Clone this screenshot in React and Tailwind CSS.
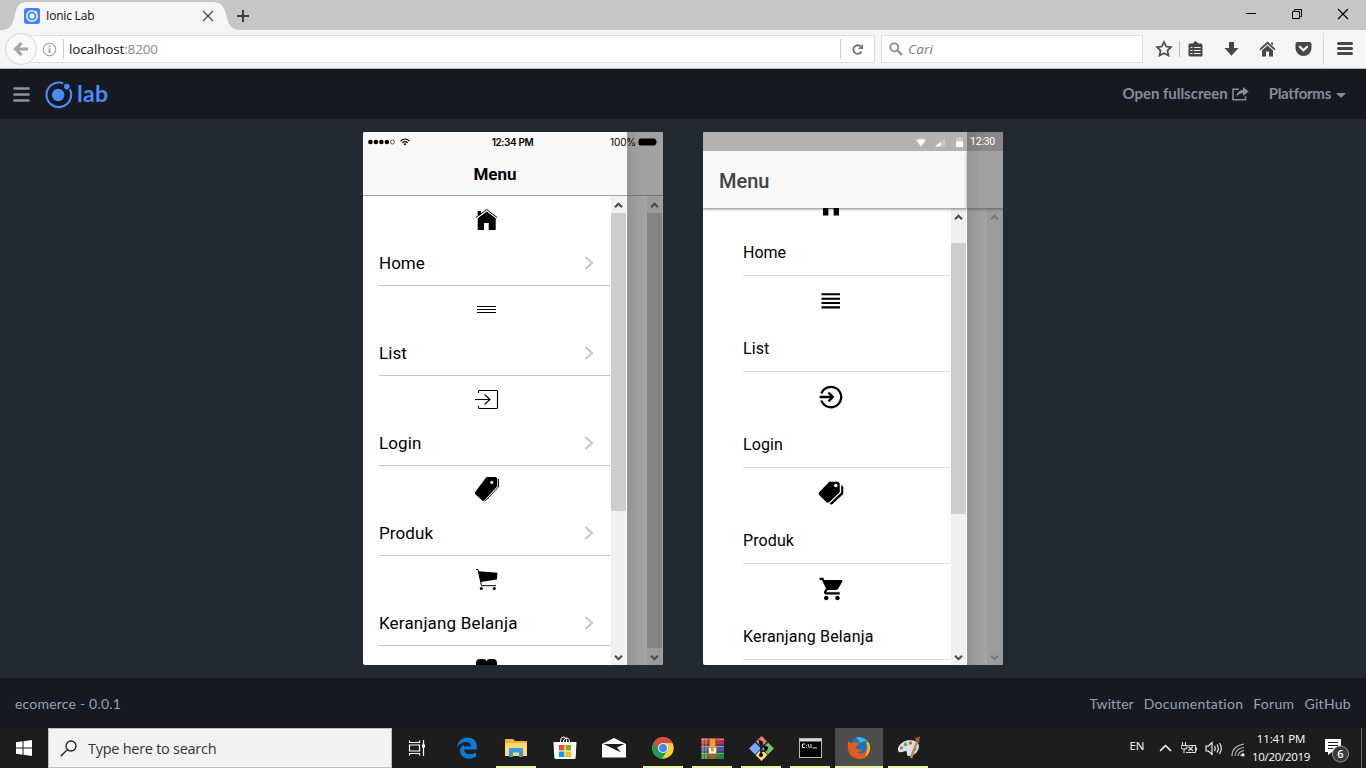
import React from "react";
import { IoMdLogIn, IoMdPricetags, IoMdCart, IoMdHome } from "react-icons/io";

const segoe = "font-['Open_Sans','Noto_Sans',sans-serif]";

function Tab() {
  return (
    <div className="relative h-[30px] w-[236px] shrink-0">
      <svg className="absolute left-0 top-0" width="242" height="30" viewBox="0 0 242 30">
        <path d="M1 30C13 30 13 21 15 14C17 6 19 2 28 2H212C221 2 224 6 226 14C228 22 229 30 241 30Z" fill="#f5f5f5" />
      </svg>
      <div className="relative flex h-full items-center pl-6 pt-[2px]">
        <svg width="16" height="16" viewBox="0 0 16 16" className="shrink-0">
          <rect width="16" height="16" rx="2.5" fill="#4285f4" />
          <circle cx="8" cy="8" r="5.2" fill="none" stroke="#fff" strokeWidth="1.3" />
          <circle cx="8" cy="8" r="2.6" fill="#fff" />
          <circle cx="12" cy="4.6" r="1.3" fill="#fff" />
        </svg>
        <span className="ml-[6px] w-[154px] whitespace-nowrap text-[12px] leading-4 tracking-[-0.2px] text-[#111]">Ionic Lab</span>
        <svg width="16" height="16" viewBox="0 0 16 16" className="shrink-0">
          <path d="M3 3L13 13M13 3L3 13" stroke="#4a4a4a" strokeWidth="1.3" />
        </svg>
      </div>
    </div>
  );
}

function Browser() {
  return (
    <div className={`${segoe} shrink-0`}>
      <div className="flex h-[30px] bg-[#c6c6c6]">
        <Tab />
        <svg width="14" height="14" viewBox="0 0 14 14" className="mt-[9px]">
          <path d="M7 1V13M1 7H13" stroke="#3f3f3f" strokeWidth="2" />
        </svg>
        <div className="ml-auto flex gap-[34px] pr-[17px] pt-2 text-black">
          <svg width="12" height="12"><path d="M1 5.5H11" stroke="currentColor" /></svg>
          <svg width="12" height="12" fill="none" stroke="currentColor"><path d="M1.500 3.500H8.500V10.500H1.500ZM3.500 3.500V1.500H10.500V8.500H8.500" /></svg>
          <svg width="12" height="12"><path d="M1 1L11 11M11 1L1 11" stroke="currentColor" strokeWidth="1.2" /></svg>
        </div>
      </div>
      <div className="flex h-[39px] border-b border-[#b5b5b5] bg-[#f5f5f5] pt-[3px]">
        <div className="z-10 flex h-8 w-8 ml-[5px] shrink-0 items-center justify-center rounded-full border border-[#d6d6d6] bg-[#f9f9f9]">
          <svg width="16" height="16" viewBox="0 0 16 16"><path d="M8.500 2L2.500 8L8.500 14M3 8H15" fill="none" stroke="#a9a9a9" strokeWidth="3.200" /></svg>
        </div>
        <div className="-ml-2 mt-[2px] flex h-7 w-[846px] items-center border border-l-0 border-[#dedede] bg-white">
          <svg width="15" height="15" viewBox="0 0 15 15" className="ml-[13px]" fill="none" stroke="#8d8d8d">
            <circle cx="7.500" cy="7.500" r="6.300" />
            <path d="M7.500 6.500V11" strokeWidth="1.600" /><path d="M7.500 3.700V5.200" strokeWidth="1.600" />
          </svg>
          <div className="ml-[6px] h-5 w-px bg-[#cfcfcf]" />
          <div className="ml-[5px] pt-px whitespace-nowrap text-[13.500px] tracking-[-0.150px] text-[#111]">localhost<span className="text-[#8a8a8a]">:8200</span></div>
          <div className="ml-auto h-5 w-px bg-[#cfcfcf]" />
          <div className="flex w-[33px] justify-center">
            <svg width="13" height="13" viewBox="0 0 13 13"><path d="M10.500 8.500A4.300 4.300 0 1 1 9.500 3.300" fill="none" stroke="#707070" strokeWidth="1.800" /><path d="M12 1V6H7Z" fill="#707070" /></svg>
          </div>
        </div>
        <div className="ml-[6px] mt-[2px] flex h-7 w-[262px] items-center border border-[#dedede] bg-white pl-[7px]">
          <svg width="14" height="14" viewBox="0 0 14 14" fill="none" stroke="#8d8d8d"><circle cx="5.300" cy="5.300" r="4" strokeWidth="1.800" /><path d="M8.300 8.300L13 13" strokeWidth="2.300" /></svg>
          <span className="ml-[5px] pt-px text-[13.500px] italic tracking-[0.200px] text-[#777]">Cari</span>
        </div>
        <div className="flex flex-1 items-center pb-1 text-[#474747]">
          <svg className="ml-3" width="18" height="18" viewBox="0 0 18 18"><path d="M9 2L11.200 6.500L16 7.200L12.500 10.600L13.400 15.500L9 13.200L4.600 15.500L5.500 10.600L2 7.200L6.800 6.500Z" fill="none" stroke="currentColor" strokeWidth="1.700" /></svg>
          <div className="ml-[6px] h-4 w-px bg-[#bdbdbd]" />
          <svg className="ml-2" width="15" height="16" viewBox="0 0 15 16"><path d="M2 2.500H4.500L7.500 0L10.500 2.500H13Q14.500 2.500 14.500 4V14Q14.500 15.500 13 15.500H2Q.5 15.500 .5 14V4Q.5 2.500 2 2.500Z" fill="currentColor" /><path d="M2.500 6.500H4.500M6 6.500H12.500M2.500 9.500H4.500M6 9.500H12.500M2.500 12.500H4.500M6 12.500H12.500" stroke="#f5f5f5" strokeWidth="1.200" /></svg>
          <svg className="ml-[21px]" width="15" height="16" viewBox="0 0 15 16"><path d="M5 1H10V7H14.500L7.500 14.800L.5 7H5Z" fill="currentColor" /></svg>
          <svg className="ml-[20px]" width="17" height="16" viewBox="0 0 17 16"><path d="M8.500 .5L16.500 8L15.300 9.200L8.500 3L1.700 9.200L.5 8ZM3 9.500L8.500 4.500L14 9.500V15.500H10V10.500H7V15.500H3ZM12 1.500H14V4L12 3Z" fill="currentColor" /></svg>
          <svg className="ml-[19px]" width="17" height="16" viewBox="0 0 17 16"><path d="M2.500 1H14.500Q16.500 1 16.500 3V7A8 8 0 0 1 .5 7V3Q.5 1 2.500 1Z" fill="currentColor" /><path d="M4.800 5.700L8.500 9.200L12.200 5.700" fill="none" stroke="#f5f5f5" strokeWidth="2.100" strokeLinecap="round" /></svg>
          <div className="ml-[11px] h-8 w-px bg-[#dadada]" />
          <svg className="ml-[13px]" width="17" height="16" viewBox="0 0 17 16"><path d="M1.500 2.500H14.500M1.500 7.500H14.500M1.500 12.500H14.500" stroke="currentColor" strokeWidth="3" strokeLinecap="round" /></svg>
        </div>
      </div>
    </div>
  );
}

function LabHeader() {
  return (
    <header className="flex h-[50px] shrink-0 items-center bg-[#151a21] pl-[13px] pr-5 font-['Lato',sans-serif] text-[15px] font-bold text-[#858c9b]">
      <svg width="17" height="15" viewBox="0 0 17 15"><path d="M1.500 1.500H15.500M1.500 7.500H15.500M1.500 13.500H15.500" stroke="#8e939e" strokeWidth="2.600" strokeLinecap="round" /></svg>
      <svg className="ml-[14px] mt-px" width="30" height="30" viewBox="0 0 30 30">
        <path d="M19.200 3.300A12.300 12.300 0 1 0 25.900 9.400" fill="none" stroke="#4a8bfc" strokeWidth="2.100" />
        <circle cx="14.200" cy="15" r="6.200" fill="#4a8bfc" /><circle cx="22.800" cy="6.600" r="2.800" fill="#4a8bfc" />
      </svg>
      <span className="ml-[3px] -mt-[2px] text-[23px] font-bold leading-7 tracking-[0.300px] text-[#4a8bfc]">lab</span>
      <span className="ml-auto -mt-px whitespace-nowrap tracking-[-0.030px]">Open fullscreen</span>
      <svg className="ml-1" width="17" height="14" viewBox="0 0 17 14"><path d="M7 2.200H1V12.800H13.500V9.500" fill="none" stroke="currentColor" strokeWidth="1.600" /><path d="M11 0L16.800 4.600L11 9V6.300Q7 6 4.300 10Q4.800 3.500 11 2.800Z" fill="currentColor" /></svg>
      <span className="ml-5 -mt-px tracking-[-0.250px]">Platforms</span>
      <svg className="ml-[5px] mt-[3px]" width="10" height="5"><path d="M0 0H10L5 5Z" fill="currentColor" /></svg>
    </header>
  );
}

const Caret = ({ down, faint }) => (
  <svg width="15" height="17" viewBox="0 0 15 17" className="block shrink-0">
    <path d={down ? "M4 7.700L7.500 11.200L11 7.700" : "M4 11.200L7.500 7.700L11 11.200"} fill="none" stroke={faint ? "#777" : "#484848"} strokeWidth="2" />
  </svg>
);

const iosIcons = {
  home: <g fill="currentColor"><path d="M2.800 11.600L13.700 3.500L24.200 11.600" fill="none" stroke="currentColor" strokeWidth="1" /><path d="M4.700 24V12.300L13.700 5.500L22.700 12.300V24H15.700V17H11V24ZM4.700 5H8V8L4.700 10.300Z" /></g>,
  list: <path d="M4 10.500H23M4 13.500H23M4 16.500H23" stroke="currentColor" />,
  login: <path d="M5.500 7V5.500Q5.500 4.500 6.500 4.500H23.500Q24.500 4.500 24.500 5.500V21.500Q24.500 22.500 23.500 22.500H6.500Q5.500 22.500 5.500 21.500V20M2 13.500H17.300M11.500 8.500L17 13.500L11.500 18.500" fill="none" stroke="currentColor" strokeWidth="1.100" />,
  tags: <g><path fillRule="evenodd" d="M13.500 1H22.700L24.300 2.600V10.200L11 24.700H9.500L2 18V16.300ZM18.800 4.700A1.600 1.600 0 1 0 18.800 7.900A1.600 1.600 0 1 0 18.800 4.700Z" fill="currentColor" /><path d="M25.500 3V11L12 25.200" fill="none" stroke="currentColor" strokeWidth=".9" /></g>,
  cart: <g fill="currentColor"><path d="M3 3.500H5L8.500 19.700H23" fill="none" stroke="currentColor" strokeWidth="1" /><path d="M5.700 5.200L24.500 6.700L23.900 13.600L7.700 15.900Z" /><circle cx="8.300" cy="22.600" r="1.500" /><circle cx="21.300" cy="22.600" r="1.500" /></g>,
  heart: <path d="M3 13V7Q3 3 7 3H10Q13.300 3 13.500 6Q13.700 3 17 3H20Q24 3 24 7V13Z" fill="currentColor" />,
};

const mdIcons = {
  home: <IoMdHome size={28} />,
  list: <svg width="28" height="28"><path d="M4.500 7.300H23M4.500 11.700H23M4.500 16H23M4.500 20.400H23" stroke="currentColor" strokeWidth="2.100" /></svg>,
  login: <IoMdLogIn size={28} />,
  tags: <IoMdPricetags size={28} />,
  cart: <IoMdCart size={28} />,
};

const items = [
  ["home", "Home", ""],
  ["list", "List", "tracking-[0.1px]"],
  ["login", "Login", "tracking-[0.1px]"],
  ["tags", "Produk", "tracking-[0.1px]"],
  ["cart", "Keranjang Belanja", "tracking-[0.17px]"],
];

function IosPhone() {
  return (
    <section className="relative flex h-[533px] w-[300px] overflow-hidden rounded-[2px] bg-white font-['Roboto',sans-serif]">
      <div className="flex w-[264px] flex-col">
        <div className="flex h-16 shrink-0 items-end justify-center border-b border-[#a3a3a3] bg-[#f8f8f8] pb-[9px] text-[17px] font-bold leading-6 text-black">Menu</div>
        <div className="flex min-h-0 flex-1">
          <ul className="w-[247px] overflow-hidden pl-4">
            {items.map(([icon, label, tracking]) => (
              <li key={icon} className="h-[90px] border-b border-[#c4c5c8] pt-[10px]">
                <svg width="28" height="28" viewBox="0 0 28 28" className="ml-[94px] block">{iosIcons[icon]}</svg>
                <div className={`mt-[17px] flex items-center justify-between pr-4 text-[17px] leading-6 text-black ${tracking}`}>
                  {label}
                  <svg width="10" height="16" viewBox="0 0 10 16"><path d="M1.500 2L8 8L1.500 14" fill="none" stroke="#c8c7cc" strokeWidth="2.200" /></svg>
                </div>
              </li>
            ))}
            <li className="pt-[10px]"><svg width="28" height="28" viewBox="0 0 28 28" className="ml-[94px]">{iosIcons.heart}</svg></li>
          </ul>
          <div className="ml-px flex w-[15px] flex-col bg-[#f0f0f0]">
            <Caret />
            <div className="h-[298px] bg-[#cdcdcd]" />
            <div className="mt-auto"><Caret down /></div>
          </div>
        </div>
      </div>
      <div className="flex w-9 flex-col bg-[#a6a6a6]">
        <div className="h-16 shrink-0 border-b border-[#747474] bg-gradient-to-r from-[#959595] to-[#a1a1a1] to-40%" />
        <div className="flex flex-1 justify-end bg-gradient-to-r from-[#949494] to-[#a6a6a6] to-60%">
          <div className="mr-px flex w-[15px] flex-col bg-[#9b9b9b]">
            <Caret />
            <div className="flex-1 bg-[#848484]" />
            <Caret down />
          </div>
        </div>
      </div>
      <div className="absolute inset-x-0 top-0 grid h-5 grid-cols-3 items-center px-[5px] font-['Inter',sans-serif] text-[10px] font-semibold text-black">
        <div className="flex items-center gap-1">
          <svg width="28" height="6" viewBox="0 0 28 6"><g fill="currentColor"><circle cx="2.400" cy="3" r="2.300" /><circle cx="7.900" cy="3" r="2.300" /><circle cx="13.400" cy="3" r="2.300" /><circle cx="18.900" cy="3" r="2.300" /></g><circle cx="24.500" cy="3" r="2" fill="none" stroke="currentColor" strokeWidth=".6" /></svg>
          <svg width="10" height="8" viewBox="0 0 10 8"><path d="M.6 3Q5-1 9.400 3M2.300 4.800Q5 2.400 7.700 4.800" fill="none" stroke="currentColor" strokeWidth="1.100" /><path d="M3.500 5.900Q5 4.700 6.500 5.900L5 7.600Z" /></svg>
        </div>
        <div className="whitespace-nowrap pr-px text-center tracking-[-0.400px]">12:34 PM</div>
        <div className="flex items-center justify-end gap-[2px] font-normal tracking-[-0.150px]">
          100%
          <svg width="20" height="8" viewBox="0 0 20 8"><rect x=".5" y=".5" width="17.500" height="7" rx="2" /><path d="M18.500 2Q20 4 18.500 6Z" /></svg>
        </div>
      </div>
    </section>
  );
}

function AndroidPhone() {
  return (
    <section className="relative flex h-[533px] w-[300px] overflow-hidden rounded-[2px] bg-white font-['Roboto',sans-serif]">
      <div className="flex w-[264px] flex-col">
        <div className="z-20 h-[19px] shrink-0 bg-[#b2b2b2]" />
        <div className="z-10 flex h-[57px] shrink-0 items-center bg-[#f8f8f8] pl-4 pt-[2px] text-[20px] font-medium text-[#424242] shadow-[0_1px_3px_rgba(0,0,0,0.5)]">Menu</div>
        <div className="flex min-h-0 flex-1">
          <ul className="-mt-7 w-[247px] pl-10">
            {items.map(([icon, label, tracking]) => (
              <li key={icon} className="h-24 border-b border-[#dedede] pt-[11px]">
                <div className="ml-[73.5px] h-7 text-black">{mdIcons[icon]}</div>
                <div className={`mt-[22px] text-[16px] leading-6 text-black ${tracking}`}>{label}</div>
              </li>
            ))}
          </ul>
          <div className="ml-px flex w-[15px] flex-col bg-[#f0f0f0]">
            <Caret />
            <div className="mt-[18px] h-[271px] bg-[#cdcdcd]" />
            <div className="mt-auto"><Caret down /></div>
          </div>
        </div>
      </div>
      <div className="z-20 flex w-9 flex-col bg-[#a6a6a6]">
        <div className="z-20 h-[19px] shrink-0 bg-gradient-to-r from-[#7c7c7c] to-[#888] to-60%" />
        <div className="z-10 h-[57px] shrink-0 bg-gradient-to-r from-[#959595] to-[#a1a1a1] to-40% shadow-[0_1px_3px_rgba(0,0,0,0.4)]" />
        <div className="flex flex-1 justify-end bg-gradient-to-r from-[#949494] to-[#a6a6a6] to-60%">
          <div className="flex w-4 flex-col justify-between bg-[#9b9b9b]">
            <Caret faint />
            <Caret down faint />
          </div>
        </div>
      </div>
      <div className="absolute right-0 top-0 z-30 flex h-5 items-center pr-2 text-[10.5px] text-white">
        <svg width="12" height="9" viewBox="0 0 12 9"><path d="M0 1.500Q6-1 12 1.500L6 8.500Z" fill="#ccc" /><path d="M1.700 2.500Q6 .5 10.300 2.500L6 8.500Z" fill="#fff" /></svg>
        <svg className="ml-2" width="10" height="9" viewBox="0 0 10 9"><path d="M10 0V8.500H0Z" fill="#c8c8c8" /><path d="M5.500 4V8.500H0Z" fill="#fff" /></svg>
        <svg className="ml-[11px]" width="7" height="10" viewBox="0 0 7 10"><path d="M0 1H2V0H5V1H7V10H0Z" fill="#ccc" /><path d="M0 4.500H7V10H0Z" fill="#fff" /></svg>
        <span className="ml-[7px] tracking-[-0.250px]">12:30</span>
      </div>
    </section>
  );
}

function Slot({ children, open, active }) {
  return (
    <div className={`flex h-10 w-12 shrink-0 flex-col items-center ${active ? "bg-[#4d4d4d]" : ""}`}>
      <div className="flex h-[38px] items-center pt-[2px]">{children}</div>
      {open && <div className={`h-[2px] bg-[#e3f7a4] ${active ? "w-12" : "w-10"}`} />}
    </div>
  );
}

function Taskbar() {
  return (
    <div className={`flex h-10 shrink-0 items-center bg-[#1d1d1d] text-white ${segoe}`}>
      <svg width="16" height="16" viewBox="0 0 16 16" className="ml-4"><path d="M0 2.300L6.500 1.300V7.500H0ZM7.500 1.200L16 0V7.500H7.500ZM0 8.500H6.500V14.700L0 13.700ZM7.500 8.500H16V16L7.500 14.800Z" fill="#fff" /></svg>
      <div className="ml-4 flex h-10 w-[344px] items-center border border-[#bcbcbc] bg-[#f2f2f2] text-[#333]">
        <svg width="17" height="17" viewBox="0 0 17 17" className="ml-[11px]" fill="none" stroke="#222" strokeWidth="1.300"><circle cx="11" cy="6" r="5" /><path d="M7.300 9.700L.7 16.300" /></svg>
        <span className="ml-[11px] whitespace-nowrap pt-px text-[14.500px] tracking-[-0.270px]">Type here to search</span>
      </div>
      <div className="flex gap-px pl-[2px]">
        <Slot><svg className="-ml-[3px]" width="18" height="18" viewBox="0 0 18 18" fill="none" stroke="#fff" strokeWidth="1.200"><path d="M1.500 1.500V3.500H11.500V1.500M1.500 6H11.500V12H1.500ZM1.500 16.500V14.500H11.500V16.500M15.500 1V17" /><path d="M14 5.500H17V8.500H14Z" fill="#fff" stroke="none" /></svg></Slot>
        <Slot><svg width="21" height="22" viewBox="0 0 21 22"><path d="M0 10Q1 1 10.500 .5Q20 .5 20 10.500V12.500H7Q7.500 17 12.500 17.300Q16 17.400 19 15.500V19.800Q16 21.700 11.800 21.700Q3.300 21 3 14Q3 9.500 7.500 7.500Q6.800 8.500 6.800 9.500H13.800Q13.800 5 9.500 5Q4 5 0 10Z" fill="#0a78d7" /></svg></Slot>
        <Slot open><svg width="22" height="20" viewBox="0 0 22 20"><path d="M0 1H8L10 3H22V17Q22 18 21 18H1Q0 18 0 17Z" fill="#eeb52f" /><path d="M0 5H22V18H0Z" fill="#fcd878" /><path d="M4 19V11.500Q4 10 5.500 10H16.500Q18 10 18 11.500V19H14V14.500H8V19Z" fill="#3c9ad9" /></svg></Slot>
        <Slot><svg width="24" height="24" viewBox="0 0 24 24"><path d="M7.500 7V5Q7.500 1 10.500 1Q13 1 13.500 3.500V7M10.500 7V5Q11 2 14 2Q16.500 2 16.500 7" fill="none" stroke="#fff" /><path d="M.5 6H23.500L22.700 21.500Q22.500 23 21 23H3Q1.500 23 1.300 21.500Z" fill="#fff" /><path d="M6 9H11.500V14.500H6Z" fill="#f25022" /><path d="M12.500 9H18V14.500H12.500Z" fill="#7fba00" /><path d="M6 15.500H11.500V21H6Z" fill="#00a4ef" /><path d="M12.500 15.500H18V21H12.500Z" fill="#ffb900" /></svg></Slot>
        <Slot><svg width="24" height="20" viewBox="0 0 24 20"><path d="M0 6L12 0L24 6V19.500H0Z" fill="#fff" /><path d="M1.500 6L19 14.500L15 9.500L22.500 6Z" fill="#1d1d1d" /></svg></Slot>
        <Slot open><svg width="22" height="22" viewBox="0 0 22 22"><circle cx="11" cy="11" r="10.700" fill="#fc3" /><path d="M11 11L1.700 5.600A10.700 10.700 0 0 0 10 21.700L15.700 13Z" fill="#1b9b58" /><path d="M1.700 5.600A10.700 10.700 0 0 1 20.500 6H11Q6.500 6.500 6.200 12.500Z" fill="#dd4b3e" /><circle cx="11" cy="11" r="5" fill="#fff" /><circle cx="11" cy="11" r="4" fill="#4688f1" /></svg></Slot>
        <Slot open><svg width="25" height="23" viewBox="0 0 25 23"><path d="M1 1H24V8H1Z" fill="#b8324b" /><path d="M1 8H24V15H1Z" fill="#4a59a8" /><path d="M1 15H24V22H1Z" fill="#26834a" /><path d="M1 2.500H24M1 9.500H24M1 16.500H24" stroke="#fff" strokeOpacity=".35" /><path d="M1 8H24M1 15H24" stroke="#222" strokeWidth=".8" /><path d="M3 1V22M6 1V22" stroke="#e7c458" strokeWidth=".8" /><path d="M9 1H16V22H9Z" fill="#a9601e" /><path d="M10 2H15V9H10ZM8.500 9H16.500V16H8.500Z" fill="#e8a13b" /><path d="M10 11V15.500H15V11" fill="none" stroke="#fff" strokeWidth="1.800" /></svg></Slot>
        <Slot open><svg width="25" height="25" viewBox="0 0 25 25"><path d="M12.500 0L18 5.500L12.500 11L7 5.500Z" fill="#ef7878" /><path d="M6 6.500L12 12.500L6 18.500L0 12.500Z" fill="#79a9f5" /><path d="M19 6.500L25 12.500L19 18.500L13 12.500Z" fill="#7bbf62" /><path d="M12.500 13L18.500 19L12.500 25L6.500 19Z" fill="#f5dc74" /><path d="M10 4L12 6V19M12 8L18 13M12.500 15Q18 16 17.500 12" fill="none" stroke="#222" strokeWidth="1.800" /><circle cx="12" cy="7" r="2" /><circle cx="17" cy="12" r="2" /><circle cx="12" cy="19" r="2" /></svg></Slot>
        <Slot open><svg width="23" height="20" viewBox="0 0 23 20"><rect x=".5" y=".5" width="22" height="19" fill="#000" stroke="#b8b8b8" /><path d="M1 1H22V3.500H1Z" fill="#d9d9d9" /><path d="M6 6H3.500V9.500H6M7.500 7V7.800M7.500 9V9.800M9 6L10.500 10M12 6V10M13.500 10H18" fill="none" stroke="#fff" strokeWidth=".9" /></svg></Slot>
        <Slot open active><svg width="24" height="24" viewBox="0 0 24 24"><circle cx="12.500" cy="11.500" r="10.500" fill="#1473ba" /><path d="M9 1.500Q16 0 20 5Q16 4.500 13.500 7Z" fill="#41b6e9" /><path d="M1.500 5L4 7.500Q6 5.500 8 6L12 7Q12 9.500 9.500 10Q8 11.500 10 13Q12 14.500 15 13Q13.500 17 9.500 16Q14 19 17.500 16Q21 13 19 7Q22.500 9.500 23 13Q22 22.500 12.500 23Q2 22.500 .7 12Q.5 8 1.500 5Z" fill="#e75b19" /><path d="M23 10Q23.500 18 17 21.500Q22 16 20 8Q18.500 5.500 20.500 5.500Q22.500 7 23 10Z" fill="#fdbd26" /></svg></Slot>
        <Slot open><svg width="25" height="25" viewBox="0 0 25 25"><path d="M2 12Q5 5 13 4Q23 4 23 11Q22 18 14 20Q10 20.500 11 17Q11 14 8 15.500Q1 18 2 12Z" fill="#d6e3ec" /><circle cx="5.500" cy="12" r="1.700" fill="#de6b37" /><circle cx="9.500" cy="8.500" r="1.800" fill="#5ba941" /><circle cx="14.500" cy="7" r="1.800" fill="#e15b39" /><circle cx="19" cy="13" r="1.600" fill="#3689ca" /><path d="M22 3L15 22" stroke="#c98842" strokeWidth="2.500" /><path d="M19 2L24 .5L23 7L20 6Z" fill="#995b35" /></svg></Slot>
      </div>
      <div className="ml-auto flex h-10 items-center">
        <span className="-mt-1 text-[11.500px] tracking-[-0.300px]">EN</span>
        <svg className="ml-[15px]" width="13" height="8"><path d="M1 7L6.500 1.500L12 7" fill="none" stroke="#fff" strokeWidth="1.500" /></svg>
        <svg className="ml-[9px]" width="17" height="14" viewBox="0 0 17 14" fill="none" stroke="#ddd"><path d="M1.500 1V4M4.500 1V4M0 4.500H6V6Q6 8 3 8Q0 8 0 6V5M3 8V12M5 11.500H14.500V4.500H7.500M15.500 6.500V9.500M7.500 5.500L12 10M12 5.500L7.500 10" strokeWidth="1.100" /></svg>
        <svg className="ml-[7px]" width="18" height="15" viewBox="0 0 18 15" fill="none" stroke="#fff"><path d="M1 5H3.500L7 1.500V13.500L3.500 10H1ZM9.500 5Q11 7.500 9.500 10M12 3.500Q14.500 7.500 12 11.500M14.500 2Q18 7.500 14.500 13" strokeWidth="1.100" /></svg>
        <svg className="ml-[8px] mt-1" width="14" height="14" viewBox="0 0 14 14" fill="none" stroke="#bbb"><path d="M1 13Q1 3 13 1M4 13Q4.500 5.500 13 4.500M7 13Q7.500 8.500 13 7.500M9.500 13Q10 11 13 10.500" strokeWidth="1.100" /><circle cx="12" cy="12" r="1.500" fill="#fff" stroke="none" /></svg>
        <div className="ml-[6px] w-[60px] whitespace-nowrap text-center text-[11.500px] leading-[18px]">
          <div className="tracking-[-0.150px]">11:41 PM</div>
          <div className="tracking-[-0.300px]">10/20/2019</div>
        </div>
        <svg className="ml-[13px] mt-1" width="26" height="26" viewBox="0 0 26 26"><path d="M1 2H17V15H8L4 18V15H1Z" fill="#fff" /><path d="M4 5.500H14M4 8.500H14M4 11.500H9" stroke="#1d1d1d" /><circle cx="16.500" cy="17" r="8" fill="#3a3a3a" stroke="#999" /><text x="16.500" y="21" textAnchor="middle" fontSize="11" fontWeight="600" fill="#fff">6</text></svg>
        <div className="ml-[11px] mr-1 h-10 w-px bg-[#6a6a6a]" />
      </div>
    </div>
  );
}

export default function App() {
  return (
    <div className="flex h-[768px] w-[1366px] flex-col overflow-hidden bg-[#232930]">
      <Browser />
      <LabHeader />
      <main className="flex flex-1 justify-center gap-10 pt-[13px]">
        <IosPhone />
        <AndroidPhone />
      </main>
      <footer className="flex h-[50px] shrink-0 items-center gap-[10px] bg-[#151a21] px-[15px] font-['Lato',sans-serif] text-[14px] text-[#98a2b3]">
        <span className="mr-auto tracking-[0.200px]">ecomerce - 0.0.1</span>
        <span className="tracking-[0.050px]">Twitter</span>
        <span className="tracking-[0.300px]">Documentation</span>
        <span className="tracking-[0.300px]">Forum</span>
        <span className="tracking-[0.300px]">GitHub</span>
      </footer>
      <Taskbar />
    </div>
  );
}
